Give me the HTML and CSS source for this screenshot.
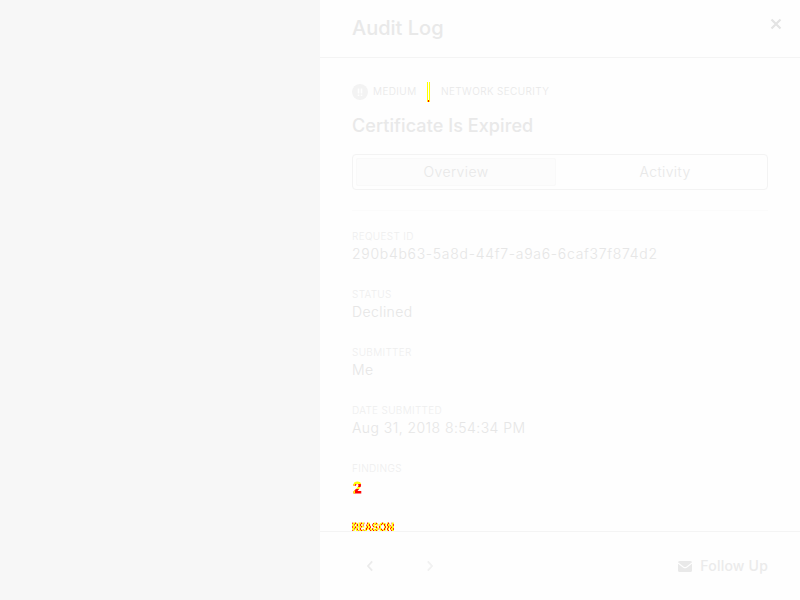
FILE: index.html
```
<!DOCTYPE html>
<html lang="en">
<head>
<meta charset="utf-8">
<title>Audit Log</title>
<link rel="stylesheet" href="styles.css">
</head>
<body>
<div class="backdrop"></div>
<aside class="panel">
  <header class="header">
    <h1>Audit Log</h1>
    <svg class="close" width="12" height="12" viewBox="0 0 12 12"><path d="M1.5 1.5l9 9M10.5 1.5l-9 9"/></svg>
  </header>
  <main class="content">
    <div class="meta">
      <svg class="severity" width="16" height="16" viewBox="0 0 16 16"><circle cx="8" cy="8" r="8"/><path d="M6.5 4.5v5M9.5 4.5v5M6.5 10.5v1.5M9.5 10.5v1.5"/></svg>
      <span class="level">MEDIUM</span>
      <i class="divider"></i>
      <span class="category">NETWORK SECURITY</span>
    </div>
    <h2>Certificate Is Expired</h2>
    <nav class="tabs"><span class="tab active">Overview</span><span class="tab second">Activity</span></nav>
    <dl>
      <div class="field"><dt>REQUEST ID</dt><dd class="request">290b4b63-5a8d-44f7-a9a6-6caf37f874d2</dd></div>
      <div class="field"><dt>STATUS</dt><dd>Declined</dd></div>
      <div class="field"><dt>SUBMITTER</dt><dd>Me</dd></div>
      <div class="field"><dt>DATE SUBMITTED</dt><dd class="date">Aug 31, 2018 8:54:34 PM</dd></div>
      <div class="field"><dt>FINDINGS</dt><dd class="changed count">2</dd></div>
      <div class="field"><dt class="changed reason">REASON</dt></div>
    </dl>
  </main>
  <footer class="footer">
    <svg class="arrow" width="6" height="12" viewBox="0 0 6 12"><path d="M5.2 1.3L1 6l4.2 4.7"/></svg>
    <svg class="arrow next" width="6" height="12" viewBox="0 0 6 12"><path d="M.8 1.3L5 6 .8 10.7"/></svg>
    <span class="follow"><svg class="mail" width="14" height="11" viewBox="0 0 14 11"><rect width="14" height="11" rx="1.5"/><path d="M0 2l5.5 4.2q1.5 1 3 0L14 2"/></svg><span class="follow-label">Follow Up</span></span>
  </footer>
</aside>
</body>
</html>
```
FILE: styles.css
```
* { box-sizing: border-box; }
body { margin: 0; width: 800px; height: 600px; display: flex; overflow: hidden; background: #fefefe; font-family: Inter, "Liberation Sans", sans-serif; font-weight: 300; color: #e6e6e6; }
h1, h2, dl, dd { margin: 0; }
.backdrop { width: 320px; background: #f7f7f7; }
.panel { width: 480px; height: 600px; display: flex; flex-direction: column; }
.header { height: 58px; flex: none; display: flex; justify-content: space-between; padding: 16px 18px 0 32px; border-bottom: 1px solid #f4f4f4; }
h1 { font-size: 20px; line-height: 24px; font-weight: 500; letter-spacing: 0; color: #e9e9e9; }
.close { margin-top: 2px; fill: none; stroke: #e4e4e4; stroke-width: 2.2; }
.content { height: 473px; flex: none; overflow: hidden; padding: 24px 32px 0; }
.meta { display: flex; height: 20px; align-items: center; font-size: 10px; line-height: 16px; letter-spacing: .4px; color: #e8e8e8; }
.severity { fill: #f3f3f3; }
.severity path { stroke: #fefefe; stroke-width: 1.6; }
.level, .category { padding-bottom: 2px; }
.level { width: 54px; margin-left: 5px; white-space: nowrap; }
.divider { width: 3px; height: 20px; border: solid #ff0; border-width: 0 1px; background: linear-gradient(#fefefe 18px, #f00 18px); }
.category { margin-left: 11px; white-space: nowrap; }
h2 { margin-top: 12px; font-size: 18px; line-height: 24px; font-weight: 500; letter-spacing: .08px; color: #e9e9e9; }
.tabs { display: flex; height: 36px; margin-top: 16px; padding: 3px; border: 1px solid #f3f3f3; border-radius: 4px; font-size: 14px; line-height: 27px; color: #e8e8e8; text-align: center; letter-spacing: .4px; }
.tab { width: 200px; height: 28px; }
.active { background: #fcfcfc; border: 1px solid #f9f9f9; border-radius: 2px; line-height: 26px; }
.second { width: 208px; margin-left: 5px; margin-right: -5px; line-height: 28px; }
dl { margin-top: 20px; padding-top: 17px; border-top: 1px solid #fbfbfb; }
.field { height: 58px; }
dt { font-size: 10px; line-height: 16px; letter-spacing: .32px; color: #eee; }
dd { margin-top: 1px; font-size: 14px; line-height: 18px; letter-spacing: .4px; }
.request { letter-spacing: .7px; }
.date { letter-spacing: .44px; }
.changed { width: max-content; color: transparent; -webkit-text-stroke: .8px transparent; font-weight: 600; -webkit-background-clip: text; background-clip: text; }
.count { margin-top: 3px; padding-left: 1px; background-image: linear-gradient(90deg, #ff0 3px, transparent 3px), linear-gradient(#ff0 5px, #f00 5px, #f00 8px, #ff0 8px, #ff0 10px, #f00 10px); }
.reason { padding-top: 2px; line-height: 14px; letter-spacing: .1px; background-image: repeating-conic-gradient(#ff0 0 25%, #f00 0 50%); background-size: 3px 4px; }
.footer { height: 69px; flex: none; border-top: 1px solid #f4f4f4; display: flex; align-items: center; padding: 0 32px 0 47px; }
.arrow { fill: none; stroke: #ebebeb; stroke-width: 1.8; }
.next { margin-left: 54px; stroke: #f1f1f1; }
.follow { margin-left: auto; display: flex; align-items: center; font-size: 14px; font-weight: 500; letter-spacing: .2px; color: #ebebeb; white-space: nowrap; }
.follow-label { padding-bottom: 2px; }
.mail { margin-right: 8px; fill: #e9e9e9; }
.mail path { fill: none; stroke: #fefefe; stroke-width: 1.2; }
```
